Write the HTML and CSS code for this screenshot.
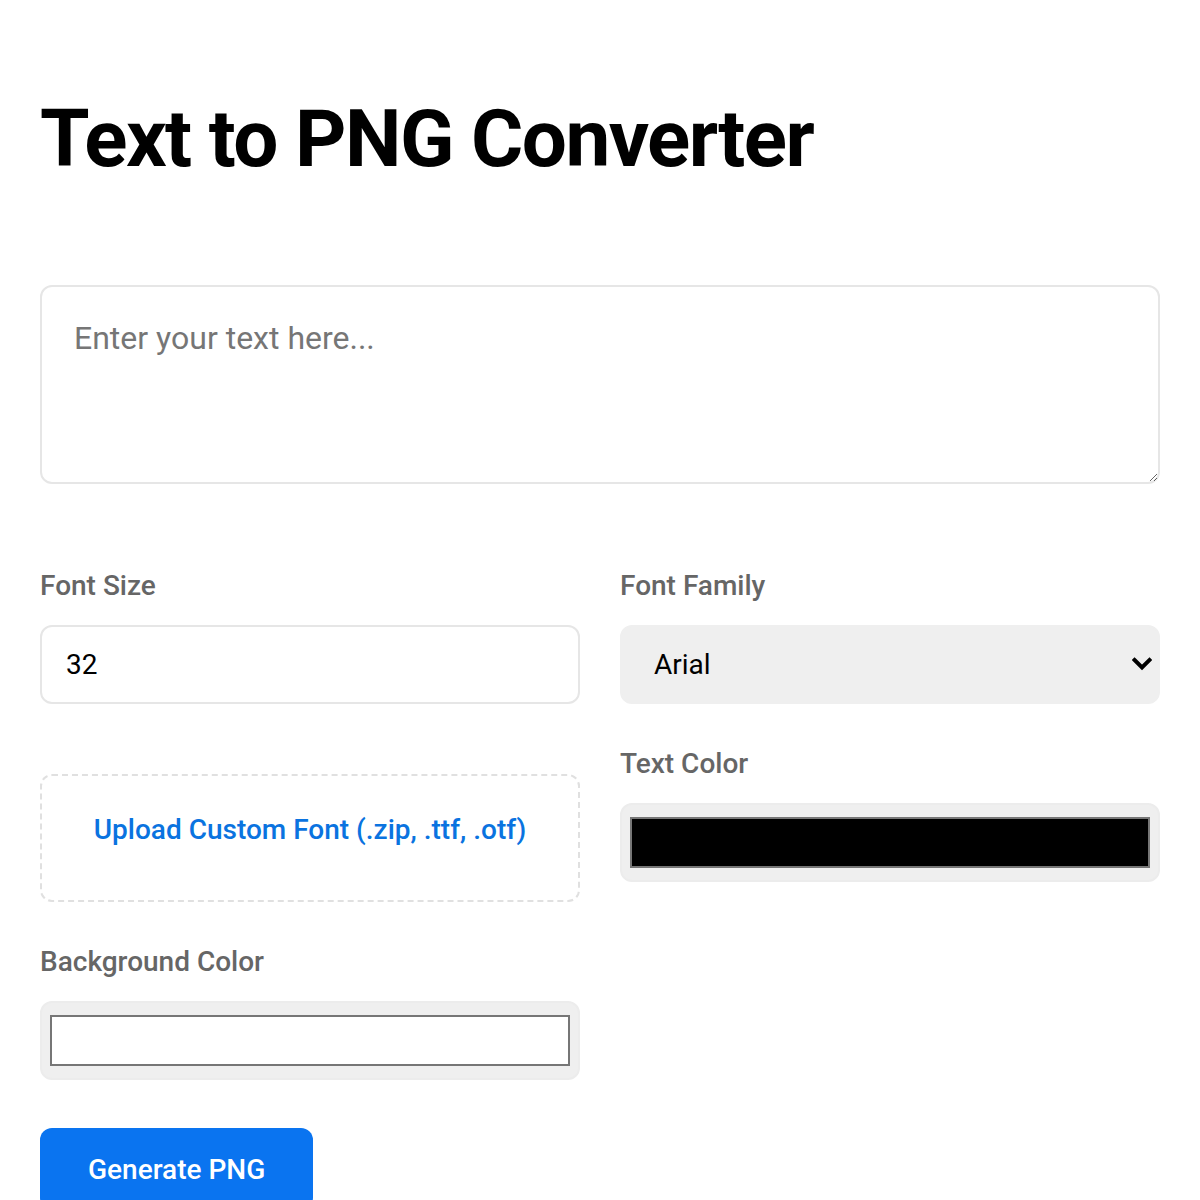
FILE: index.html
```html
<!DOCTYPE html>
<html lang="en">
<head>
<meta charset="utf-8">
<title>Text to PNG Converter</title>
<link rel="stylesheet" href="styles.css">
</head>
<body>
<main class="page">
  <h1 class="title">Text to PNG Converter</h1>
  <textarea class="text-input" placeholder="Enter your text here..."></textarea>
  <div class="options">
    <div class="field">
      <label class="label" for="size">Font Size</label>
      <input class="control" id="size" type="number" value="32">
    </div>
    <div class="field">
      <label class="label" for="family">Font Family</label>
      <div class="select-wrap">
        <select class="control select" id="family">
          <option>Arial</option>
        </select>
        <svg class="chevron" width="20" height="14" viewBox="0 0 20 14" aria-hidden="true">
          <polyline points="2.5,3 10,10.5 17.5,3" fill="none" stroke="#000" stroke-width="4" stroke-linecap="square" stroke-linejoin="miter"/>
        </svg>
      </div>
    </div>
    <div class="field upload-field">
      <label class="upload">Upload Custom Font (.zip, .ttf, .otf)</label>
    </div>
    <div class="field">
      <label class="label" for="tcolor">Text Color</label>
      <input class="color" id="tcolor" type="color" value="#000000">
    </div>
    <div class="field">
      <label class="label" for="bcolor">Background Color</label>
      <input class="color" id="bcolor" type="color" value="#ffffff">
    </div>
  </div>
  <button class="generate" type="button">Generate PNG</button>
</main>
</body>
</html>
```
FILE: styles.css
```css
html, body {
  margin: 0;
  padding: 0;
  background: #fff;
}
body {
  font-family: Roboto, "Liberation Sans", sans-serif;
  color: #000;
}
.page {
  padding: 40px 40px 0;
  box-sizing: border-box;
  width: 1200px;
}
.title {
  font-size: 80px;
  font-weight: 700;
  letter-spacing: -1.6px;
  margin: 51px 0 98px;
  line-height: 1.2;
}
.text-input {
  display: block;
  width: 100%;
  height: 199px;
  box-sizing: border-box;
  border: 2px solid #e6e6e6;
  border-radius: 12px;
  padding: 32px 32px;
  font-family: inherit;
  font-size: 32px;
  margin: 0 0 85px;
  resize: vertical;
}
.text-input::placeholder {
  color: #767676;
}
.options {
  display: grid;
  grid-template-columns: 1fr 1fr;
  column-gap: 40px;
  row-gap: 43px;
}
.field {
  display: flex;
  flex-direction: column;
}
.label {
  font-size: 28px;
  font-weight: 500;
  color: #666;
  margin-bottom: 22px;
  line-height: 34px;
}
.control {
  width: 100%;
  height: 79px;
  box-sizing: border-box;
  border: 2px solid #e6e6e6;
  border-radius: 12px;
  padding: 0 24px;
  font-family: inherit;
  font-size: 28px;
  color: #000;
  background: #fff;
}
.select-wrap {
  position: relative;
}
.select {
  -webkit-appearance: none;
  appearance: none;
  display: block;
  background: #efefef;
  border-color: #efefef;
  padding: 0 32px;
}
.chevron {
  position: absolute;
  right: 8px;
  top: 32px;
  pointer-events: none;
}
.upload-field {
  padding-top: 27px;
}
.upload {
  box-sizing: border-box;
  border: 2px dashed #e0e0e0;
  border-radius: 12px;
  padding: 37px 20px 53px;
  text-align: center;
  font-size: 28px;
  line-height: 34px;
  font-weight: 500;
  color: #0a73e0;
}
.color {
  -webkit-appearance: none;
  appearance: none;
  display: block;
  width: 100%;
  height: 79px;
  box-sizing: border-box;
  border: 2px solid #ececec;
  border-radius: 12px;
  background: #efefef;
  padding: 12px 8px;
  margin: 0;
}
.color::-webkit-color-swatch-wrapper {
  padding: 0;
}
.color::-webkit-color-swatch {
  border: 2px solid #767676;
  border-radius: 0;
}
.generate {
  margin-top: 48px;
  background: #0a74f0;
  color: #fff;
  border: none;
  border-radius: 12px;
  font-family: inherit;
  font-size: 28px;
  font-weight: 500;
  padding: 0 48px;
  height: 82px;
}
```
